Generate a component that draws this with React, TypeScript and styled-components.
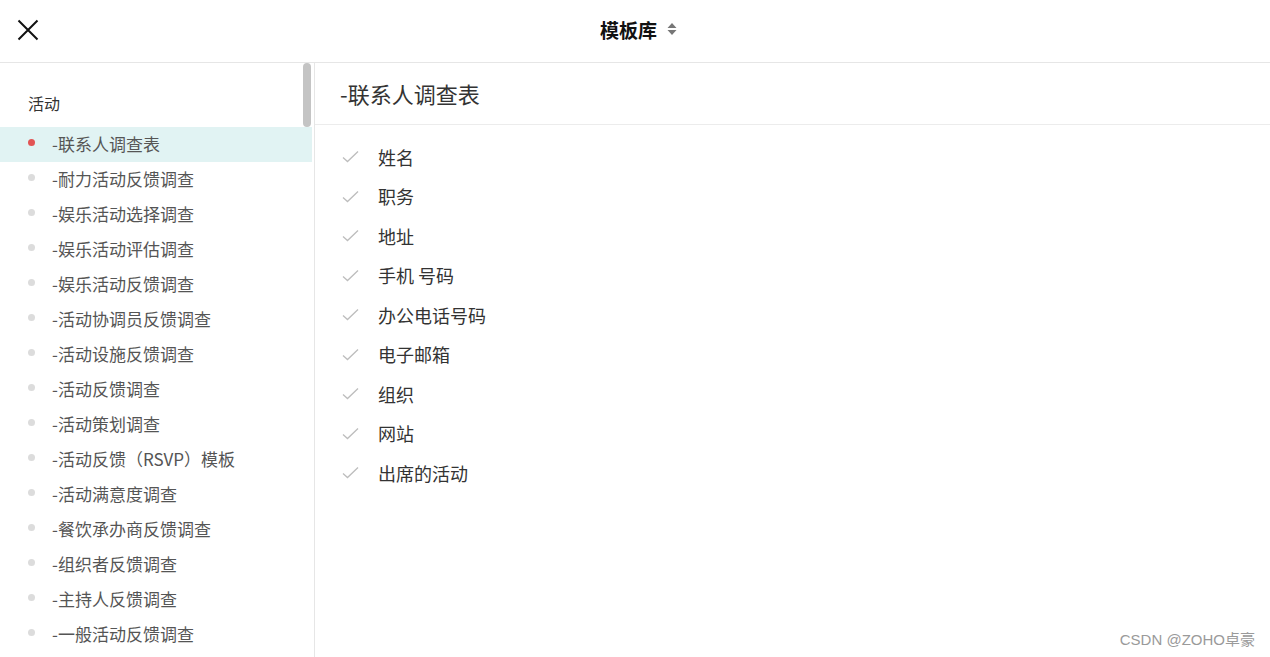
import React from "react";
import styled, { createGlobalStyle } from "styled-components";

const Global = createGlobalStyle`
  html, body { margin: 0; padding: 0; background: #fff; overflow: hidden; }
  body { font-family: "Noto Sans CJK SC", "Noto Sans", sans-serif; }
  * { box-sizing: border-box; }
`;

const Page = styled.div`
  width: 1270px;
  height: 657px;
  display: flex;
  flex-direction: column;
  position: relative;
`;

const Header = styled.header`
  height: 63px;
  flex: none;
  display: flex;
  align-items: center;
  justify-content: center;
  border-bottom: 1px solid #e6e6e6;
  position: relative;
`;

const CloseButton = styled.button`
  position: absolute;
  left: 16px;
  top: 18px;
  width: 24px;
  height: 24px;
  border: 0;
  background: none;
  padding: 0;
  display: flex;
  align-items: center;
  justify-content: center;
`;

const Title = styled.div`
  display: flex;
  align-items: center;
  gap: 10px;
  font-size: 19px;
  font-weight: 700;
  color: #111;
  margin-left: 7px;
  margin-top: -4px;
`;

const Body = styled.div`
  flex: 1;
  display: flex;
  min-height: 0;
`;

const Sidebar = styled.aside`
  width: 315px;
  flex: none;
  border-right: 1px solid #e6e6e6;
  position: relative;
  overflow: hidden;
`;

const Thumb = styled.div`
  position: absolute;
  right: 3px;
  top: 0;
  width: 8px;
  height: 64px;
  border-radius: 4px;
  background: #c4c4c4;
`;

const SectionLabel = styled.div`
  font-size: 16px;
  color: #333;
  line-height: 20px;
  padding: 30px 0 14px 28px;
`;

const Item = styled.div<{ $active?: boolean }>`
  height: 35px;
  display: flex;
  align-items: center;
  padding-left: 28px;
  padding-bottom: 3px;
  gap: 17px;
  font-size: 17px;
  color: #555;
  background: ${(p) => (p.$active ? "#e1f3f3" : "transparent")};
  margin-right: 2px;
`;

const Dot = styled.span<{ $active?: boolean }>`
  width: 7px;
  height: 7px;
  border-radius: 50%;
  background: ${(p) => (p.$active ? "#e25454" : "#dcdcdc")};
  margin-top: -1px;
`;

const Main = styled.main`
  flex: 1;
  display: flex;
  flex-direction: column;
`;

const MainTitle = styled.div`
  height: 62px;
  border-bottom: 1px solid #ececec;
  display: flex;
  align-items: center;
  padding-left: 25px;
  padding-bottom: 2px;
  font-size: 22px;
  color: #333;
`;

const FieldList = styled.ul`
  list-style: none;
  margin: 0;
  padding: 12px 0 0 27px;
  display: flex;
  flex-direction: column;
`;

const Field = styled.li`
  height: 39.5px;
  display: flex;
  align-items: center;
  gap: 19px;
  font-size: 18px;
  color: #333;
`;

const Watermark = styled.div`
  position: absolute;
  right: 15px;
  bottom: 8px;
  font-family: "Liberation Sans", "Noto Sans CJK SC", sans-serif;
  font-size: 15px;
  color: #9a9a9a;
`;

const templates = [
  "-联系人调查表",
  "-耐力活动反馈调查",
  "-娱乐活动选择调查",
  "-娱乐活动评估调查",
  "-娱乐活动反馈调查",
  "-活动协调员反馈调查",
  "-活动设施反馈调查",
  "-活动反馈调查",
  "-活动策划调查",
  "-活动反馈（RSVP）模板",
  "-活动满意度调查",
  "-餐饮承办商反馈调查",
  "-组织者反馈调查",
  "-主持人反馈调查",
  "-一般活动反馈调查",
];

const fields = ["姓名", "职务", "地址", "手机 号码", "办公电话号码", "电子邮箱", "组织", "网站", "出席的活动"];

const Check = () => (
  <svg width="17" height="13" viewBox="0 0 17 13" fill="none">
    <path d="M1 7.5 L5.5 11.5 L16 1.5" stroke="#bdbdbd" strokeWidth="1.3" />
  </svg>
);

export default function App() {
  return (
    <Page>
      <Global />
      <Header>
        <CloseButton aria-label="close">
          <svg width="22" height="22" viewBox="0 0 22 22">
            <path d="M1.5 1.5 L20.5 20.5 M20.5 1.5 L1.5 20.5" stroke="#111" strokeWidth="2" />
          </svg>
        </CloseButton>
        <Title>
          模板库
          <svg width="10" height="14" viewBox="0 0 10 14">
            <path d="M5 1 L9.5 6 L0.5 6 Z M0.5 8 L9.5 8 L5 13 Z" fill="#777" />
          </svg>
        </Title>
      </Header>
      <Body>
        <Sidebar>
          <Thumb />
          <SectionLabel>活动</SectionLabel>
          {templates.map((t, i) => (
            <Item key={t} $active={i === 0}>
              <Dot $active={i === 0} />
              {t}
            </Item>
          ))}
        </Sidebar>
        <Main>
          <MainTitle>-联系人调查表</MainTitle>
          <FieldList>
            {fields.map((f) => (
              <Field key={f}>
                <Check />
                {f}
              </Field>
            ))}
          </FieldList>
        </Main>
      </Body>
      <Watermark>CSDN @ZOHO卓豪</Watermark>
    </Page>
  );
}
